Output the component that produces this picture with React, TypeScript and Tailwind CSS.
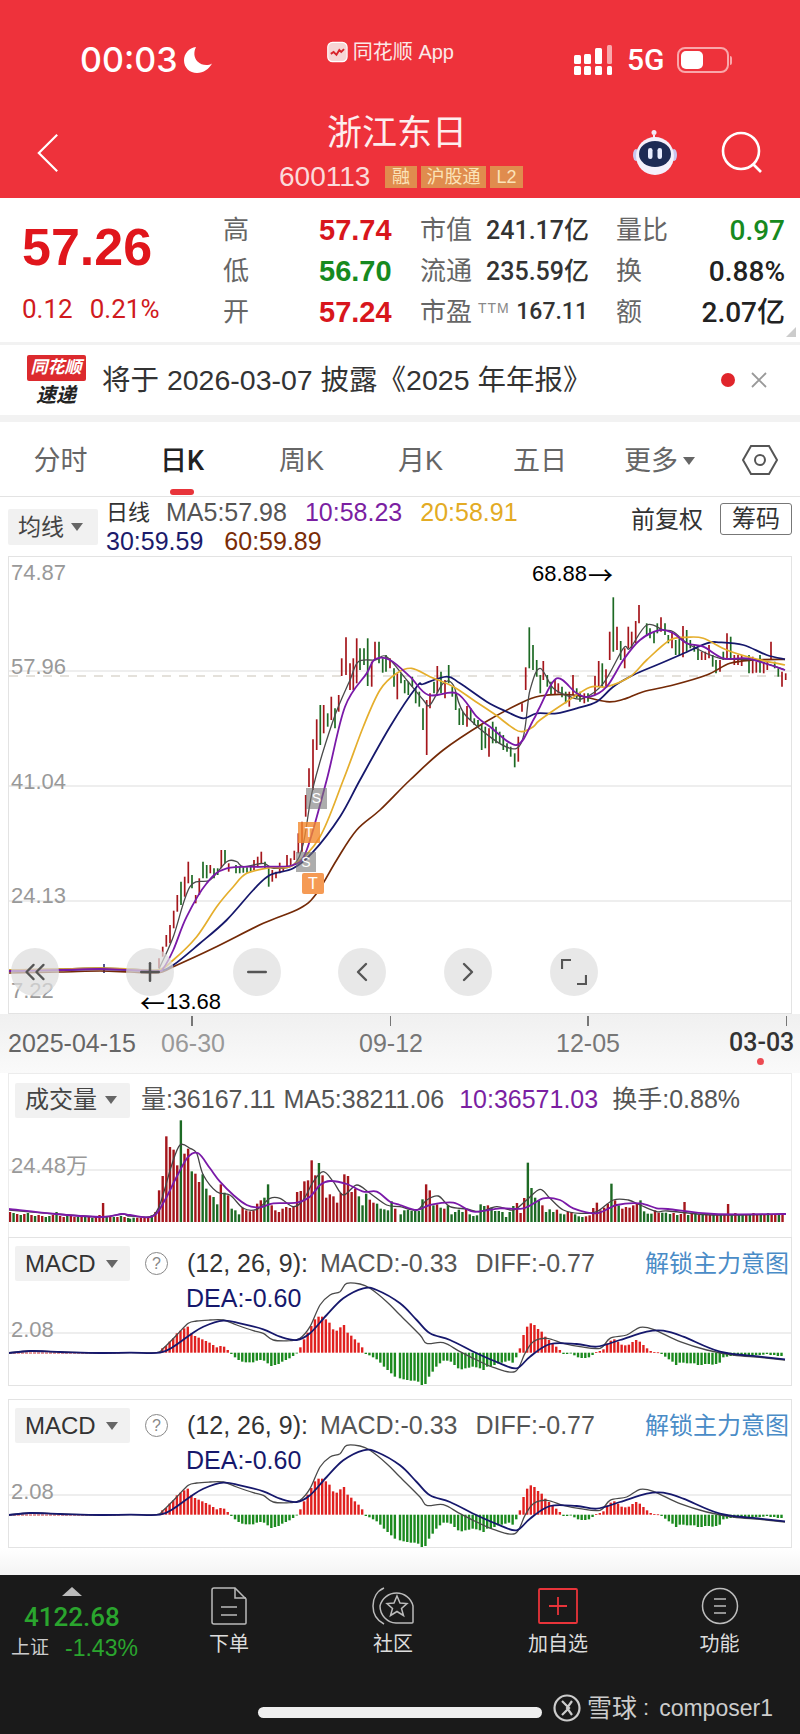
import { ChevronLeft, ChevronRight, ChevronsLeft, Minus, Plus } from 'lucide-react'

type Pt = [number, number]
type Bar = [number, number, number]

// map points read off a 3x crop back to page coordinates
const crop = (ox: number, oy: number, pts: number[][]): Pt[] => pts.map(([x, y]) => [ox + x / 3, oy + y / 3])

function smooth(pts: Pt[]) {
  let d = `M${pts[0][0]} ${pts[0][1]}`
  for (let i = 0; i < pts.length - 1; i++) {
    const p0 = pts[Math.max(i - 1, 0)]
    const p1 = pts[i]
    const p2 = pts[i + 1]
    const p3 = pts[Math.min(i + 2, pts.length - 1)]
    const c1x = p1[0] + (p2[0] - p0[0]) / 6
    const c1y = p1[1] + (p2[1] - p0[1]) / 6
    const c2x = p2[0] - (p3[0] - p1[0]) / 6
    const c2y = p2[1] - (p3[1] - p1[1]) / 6
    d += `C${c1x.toFixed(1)} ${c1y.toFixed(1)} ${c2x.toFixed(1)} ${c2y.toFixed(1)} ${p2[0].toFixed(1)} ${p2[1].toFixed(1)}`
  }
  return d
}

const RED = '#a5161c'
const GREEN = '#1d6a24'

const candleRed: Bar[] = [
  ...([[87,535,565],[98,500,530],[109,465,500],[120,435,490],[131,392,445],[142,345,395],[164,290,350],[175,245,310],[197,345,370],[208,295,345],[241,255,280],[274,210,265],[296,250,275],[372,240,270],[383,230,262],[394,215,250],[427,270,305],[438,275,295],[449,248,280],[460,262,275],[471,225,258],[482,235,255],[493,212,240],[505,160,220],[516,125,215],[527,45,110]] as Bar[]).map(([x, t, b]): Bar => [130 + x / 3, 780 + t / 3, 780 + b / 3]),
  ...([[27,565,621],[39,478,630],[50,418,510],[71,375,460],[94,350,420],[116,345,395],[125,235,288],[138,172,285],[150,250,330],[160,235,330],[170,175,310],[215,245,320],[225,185,240],[270,235,265],[292,280,358],[380,360,525],[390,340,385],[412,258,340],[435,300,355],[501,378,440],[567,445,530],[655,470,545],[666,370,395],[677,262,330]] as Bar[]).map(([x, t, b]): Bar => [300 + x / 3, 580 + t / 3, 580 + b / 3]),
  ...([[10,243,300],[45,300,345],[55,310,340],[88,335,380],[99,285,345],[133,340,370],[165,288,345],[176,243,320],[198,268,320],[209,155,240],[231,140,210],[254,205,265],[265,140,205],[275,155,205],[287,123,190],[297,75,130],[363,112,155],[396,155,205],[429,138,232],[485,215,240],[496,215,240],[507,195,235],[540,240,275],[561,160,235],[583,225,255],[594,225,255],[605,225,258],[638,230,280],[649,245,278],[671,245,280],[682,245,270],[693,185,240],[726,275,320],[737,280,300]] as Bar[]).map(([x, t, b]): Bar => [540 + x / 3, 580 + t / 3, 580 + b / 3]),
]

const candleGreen: Bar[] = [
  ...([[153,305,375],[186,285,325],[219,245,295],[230,255,295],[252,265,295],[263,265,285],[285,210,250],[318,255,280],[329,260,280],[340,262,278],[351,262,278],[362,255,275],[405,245,265],[416,265,320]] as Bar[]).map(([x, t, b]): Bar => [130 + x / 3, 780 + t / 3, 780 + b / 3]),
  ...([[61,375,495],[83,400,440],[105,385,445],[180,205,270],[192,205,255],[203,175,318],[237,185,250],[248,235,278],[258,225,275],[282,265,320],[303,280,310],[314,300,340],[325,305,345],[337,290,320],[347,325,370],[358,335,380],[369,385,450],[402,305,340],[423,275,340],[446,255,310],[457,320,350],[467,340,390],[478,385,435],[489,395,435],[512,385,420],[523,415,435],[534,420,440],[545,435,510],[556,440,505],[578,425,490],[588,440,490],[599,455,490],[610,465,510],[621,490,515],[632,500,530],[644,520,562],[688,142,265],[699,195,270],[710,240,290],[721,285,340]] as Bar[]).map(([x, t, b]): Bar => [300 + x / 3, 580 + t / 3, 580 + b / 3]),
  ...([[22,285,320],[33,305,345],[66,320,352],[77,335,370],[110,325,355],[120,335,365],[144,340,365],[187,250,320],[220,52,215],[242,183,240],[320,130,165],[330,145,175],[342,155,190],[352,130,160],[375,130,165],[385,165,190],[407,180,225],[418,175,225],[440,150,215],[451,180,205],[463,195,215],[474,205,240],[518,225,260],[528,240,280],[550,215,240],[572,170,235],[627,225,280],[660,225,278],[704,245,265],[715,265,290]] as Bar[]).map(([x, t, b]): Bar => [540 + x / 3, 580 + t / 3, 580 + b / 3]),
]

const flatL = (y: number): Pt[] => [[9, y], [60, y - 1], [100, y - 2], [130, y - 1], [158, y]]

const ma5: Pt[] = [
  ...flatL(970),
  ...crop(130, 780, [[90,560],[130,470],[180,320],[240,300],[290,245],[320,245],[340,260],[400,250],[430,265],[490,255],[520,190],[550,20]]),
  ...crop(300, 580, [[100,420],[150,300],[175,245],[225,240],[260,230],[320,300],[370,360],[390,375],[430,310],[460,315],[500,410],[650,505],[690,330],[720,265]]),
  ...crop(540, 580, [[40,325],[90,350],[130,355],[190,310],[250,205],[270,205],[320,135],[370,150],[400,155],[450,195],[540,235],[640,240],[735,270]]),
]
const ma10: Pt[] = [
  ...flatL(971),
  ...crop(130, 780, [[100,565],[130,510],[170,410],[230,310],[290,265],[410,260],[490,255],[530,210],[590,0]]),
  ...crop(300, 580, [[135,380],[200,280],[225,238],[270,240],[330,290],[385,345],[470,340],[530,410],[570,440],[650,495],[700,420]]),
  ...crop(540, 580, [[0,380],[50,295],[110,340],[150,350],[200,320],[250,240],[300,180],[360,150],[400,160],[440,190],[490,200],[550,235],[620,235],[690,255],[735,270]]),
]
const ma20: Pt[] = [
  ...flatL(970),
  ...crop(130, 780, [[130,540],[200,470],[260,380],[310,320],[350,280],[420,263],[490,255],[570,170],[640,0]]),
  ...crop(300, 580, [[190,440],[240,330],[290,280],[335,265],[390,290],[460,320],[520,360],[580,400],[640,445],[665,455],[700,440]]),
  ...crop(540, 580, [[0,420],[80,365],[150,322],[200,320],[270,290],[320,240],[390,180],[440,172],[490,175],[560,210],[640,235],[735,255]]),
]
const ma30: Pt[] = [
  ...flatL(971),
  ...crop(130, 780, [[130,555],[210,490],[290,420],[370,330],[420,285],[490,265],[550,215],[630,110],[690,0]]),
  ...crop(300, 580, [[270,440],[350,320],[370,312],[440,290],[480,310],[560,365],[620,395],[670,415],[710,400]]),
  ...crop(540, 580, [[50,400],[110,385],[170,365],[220,320],[280,285],[350,255],[420,225],[500,190],[540,187],[610,195],[680,225],[735,238]]),
]
const ma60: Pt[] = [
  ...flatL(973),
  ...crop(130, 780, [[130,560],[250,505],[400,430],[510,385],[560,340],[620,240],[680,150],[750,90]]),
  ...crop(300, 580, [[330,600],[430,510],[550,430],[650,375]]),
  ...crop(540, 580, [[0,348],[100,345],[200,365],[250,358],[310,335],[400,315],[500,285],[570,250],[640,240],[735,238]]),
]

// volume bars: positive red, negative green, values are tops in the 3x crop (base 335)
const volLeft = [10,-9,8,-7,8,-9,7,-6,7,6,-5,-6,7,-10,6,5,-6,6,5,-5,5,-5,5,-4,5,7,19,-6,5,-5,5,-6,5,-4]
const volA = [-325,-322,322,322,322,322,-315,305,240,197,78,110,118,165,-30,130,115,-183,190,215,-192,-235,255,-260,-282,222,-247,255,-295,-300,-312,292,300,303,300,280,270,-262,-222,285,300,305,295,290,293,290,245,242,213,210,150,195,-158,195,262,252,258,277,248,192,197,245,235,-258,-285,-250,268,277,-280,-295,-297,-300,-273,295]
const volB = [-312,-300,-298,-302,-302,-302,-267,222,240,-285,282,-292,295,-285,-312,-305,-298,-305,295,-312,-317,-315,-282,-287,285,-292,-302,-302,-305,-320,-305,-287,278,308,263,-157,-233,-262,-272,285,-305,-297,-305,298,-310,-312,305,305,-312,-318,-320,318,315,293,277,300,292,280,-220,270,-285,295,290,292,285,280,-270,-303,-310,-310,300,307,-307,-307]
const volRight = [-8,9,-7,8,20,-7,8,-9,7,-8,8,7,-9,8,-7,8,18,-8,9,-7,-8,8,-7,9,8,-7,8,-9,7,8,-7,9]

const vol5: Pt[] = [
  [9, 1210], [56, 1214], [102, 1217], [122, 1214], [128, 1216],
  ...crop(130, 1110, [[0,318],[60,320],[85,295],[105,235],[125,165],[150,105],[180,115],[200,130],[220,195],[260,245],[300,255],[340,295],[380,298],[420,265],[450,265],[490,290],[520,270],[550,215],[580,185],[610,215],[640,255],[680,225],[720,250],[770,285]]),
  ...crop(400, 1110, [[0,290],[50,300],[80,270],[115,258],[150,290],[200,297],[240,305],[290,290],[340,300],[380,270],[420,238],[450,265],[490,300],[540,310],[590,305],[640,270],[685,270],[720,285],[770,305]]),
  [668, 1211], [714, 1215], [786, 1214],
]
const vol10: Pt[] = [
  [9, 1209], [56, 1214], [102, 1217], [122, 1214], [128, 1215],
  ...crop(130, 1110, [[0,315],[50,322],[80,310],[110,260],[140,200],[175,140],[205,130],[240,175],[270,215],[310,255],[350,285],[390,292],[430,280],[500,278],[540,260],[570,225],[600,213],[650,222],[700,245],[740,245],[780,275]]),
  ...crop(400, 1110, [[0,285],[50,300],[90,285],[160,278],[220,305],[300,295],[370,295],[430,265],[480,270],[520,295],[590,310],[650,285],[720,280],[770,295]]),
  [668, 1209], [714, 1214], [786, 1214],
]

const macdA = [235,228,215,205,190,182,175,170,190,198,203,208,213,218,225,232,228,230,240,252,262,270,275,277,277,277,272,270,272,280,288,285,282,275,270,265,258,250,232,208,188,168,148,140,140,148,158,178,182,172,165,188,197,208,218,232,252,256,262,268,278,290,300,310,320]
const macdB = [325,328,330,332,332,335,345,342,320,305,290,280,272,272,275,285,295,298,295,293,290,292,295,300,290,290,285,280,278,275,272,278,262,235,195,170,160,165,177,185,200,210,222,230,240,252,252,250,256,262,264,264,262,255,246,243,238,220,212,208,215,224,226,224,216,210,215,225,235,243,246,247,252,260,268,275,285,278,278,280,280,280,285,285,282,282,284,282,278,262,260,258,258,254,254,256,258,256,255,255,254,252,255,255,258,258]

const diff: Pt[] = [
  [9, 1353], [30, 1351], [60, 1352], [100, 1353],
  ...crop(130, 1270, [[0,248],[80,248],[100,235],[140,195],[175,160],[200,153],[240,150],[280,150],[320,165],[370,182],[400,190],[430,210],[480,212],[510,205],[540,170],[570,105],[600,75],[630,65],[650,40],[690,42],[720,55],[770,95]]),
  ...crop(400, 1270, [[0,135],[60,195],[80,220],[130,218],[180,245],[230,270],[280,292],[345,305],[375,250],[400,215],[440,205],[490,220],[540,230],[600,235],[630,205],[680,195],[720,172],[760,178],[840,215],[920,240],[1000,255],[1080,262],[1155,270]]),
]
const dea: Pt[] = [
  [9, 1353], [30, 1351], [60, 1352], [100, 1353],
  ...crop(130, 1270, [[0,248],[90,248],[130,230],[180,195],[220,170],[280,152],[330,160],[400,178],[450,200],[500,210],[540,190],[590,135],[640,85],[700,55],[740,60]]),
  ...crop(400, 1270, [[0,100],[50,150],[90,190],[150,210],[230,250],[300,280],[350,295],[390,260],[450,222],[530,222],[590,230],[660,210],[740,185],[790,182],[850,200],[960,245],[1080,260],[1155,268]]),
]

const quoteRows = [
  { a: '高', av: '57.74', ac: 'text-[#d8161c]', b: '市值', bv: '241.17亿', c: '量比', cv: '0.97', cc: 'text-[#178a1f]' },
  { a: '低', av: '56.70', ac: 'text-[#178a1f]', b: '流通', bv: '235.59亿', c: '换', cv: '0.88%', cc: 'text-[#222]' },
  { a: '开', av: '57.24', ac: 'text-[#d8161c]', b: '市盈', bv: '167.11', c: '额', cv: '2.07亿', cc: 'text-[#222]' },
]

function Arrow({ className = 'border-t-[#666]' }: { className?: string }) {
  return <span className={`inline-block h-0 w-0 border-x-[6px] border-t-[8px] border-x-transparent ${className}`} />
}

function StatusBar() {
  return (
    <div className="flex h-[112px] items-center pt-[8px] pl-[80px] text-white">
      <span className="w-[96px] font-['Inter',sans-serif] text-[34px] font-medium leading-none">00:03</span>
      <svg viewBox="0 0 28 26" className="ml-[8px] h-[26px] w-[28px]" fill="#fff">
        <path d="M12 0C5 1 0 6.500 0 13.500 0 20.500 5.700 26 13 26c6.500 0 12-4 15-9.500C24 19 17.500 18.500 13.500 14.500 9.800 10.500 9.500 5 12 0Z" />
      </svg>
      <div className="mb-[16px] ml-[115px] flex w-[127px] items-center gap-[5px] whitespace-nowrap">
        <svg viewBox="0 0 22 22" className="h-[22px] w-[22px]">
          <rect x="0.800" y="0.800" width="20.400" height="20.400" rx="5" fill="#f6d5d5" stroke="#fff" strokeWidth="1.200" />
          <path d="M4 13l3-2 3 3 3-5 2 2 3-3" stroke="#d8242c" strokeWidth="2" fill="none" />
        </svg>
        <span className="text-[20px] leading-none text-[#fbe9e9]">同花顺 App</span>
      </div>
      <svg viewBox="0 0 38 30" className="ml-[120px] h-[30px] w-[38px]" fill="#fff">
        <rect x="0" y="10" width="7" height="9" rx="1.500" />
        <rect x="0" y="21" width="7" height="9" rx="1.500" />
        <rect x="10" y="9" width="7" height="10" rx="1.500" />
        <rect x="10" y="21" width="7" height="9" rx="1.500" />
        <rect x="21" y="3" width="7" height="16" rx="1.500" />
        <rect x="21" y="21" width="7" height="9" rx="1.500" />
        <rect x="33" y="0" width="5" height="19" rx="1.500" fill="#f8a9ac" />
        <rect x="33" y="21" width="5" height="9" rx="1.500" />
      </svg>
      <span className="ml-[15px] font-['Roboto',sans-serif] text-[30px] font-medium leading-none">5G</span>
      <div className="ml-[12px] flex items-center">
        <div className="flex h-[26px] w-[52px] items-center rounded-[8px] border-2 border-[#f9a7aa] px-[2px]">
          <div className="h-[18px] w-[22px] rounded-[5px] bg-white" />
        </div>
        <div className="ml-px h-[9px] w-[2px] rounded-r bg-[#f9a7aa]" />
      </div>
    </div>
  )
}

function RobotIcon() {
  return (
    <svg viewBox="0 0 50 46" className="h-[46px] w-[50px]">
      <circle cx="24" cy="3.500" r="2.500" fill="#f3e9f7" />
      <path d="M24 6v6" stroke="#f3e9f7" strokeWidth="2" />
      <ellipse cx="6" cy="26" rx="3" ry="6" fill="#c9c6ef" />
      <ellipse cx="44" cy="26" rx="3" ry="6" fill="#c9c6ef" />
      <circle cx="25" cy="27" r="19" fill="#f4f0fb" />
      <ellipse cx="25" cy="25" rx="16" ry="13" fill="#1d2a55" />
      <rect x="18" y="19" width="4.500" height="11" rx="2.200" fill="#e8ecff" />
      <rect x="27.500" y="19" width="4.500" height="11" rx="2.200" fill="#e8ecff" />
    </svg>
  )
}

function Header() {
  return (
    <header className="h-[198px] bg-[#ee323b]">
      <StatusBar />
      <div className="grid h-[86px] grid-cols-[279px_244px_1fr] text-white">
        <div className="flex items-center pb-[4px] pl-[37px]">
          <svg viewBox="0 0 24 42" className="h-[40px] w-[22px]" fill="none" stroke="#fff" strokeWidth="2.400">
            <path d="M22 1 2 21l20 20" />
          </svg>
        </div>
        <div className="flex flex-col">
          <div className="ml-[48px] w-[140px] text-center text-[35px] leading-[42px] text-[#fdeeee]">浙江东日</div>
          <div className="mt-[10px] flex items-center">
            <span className="w-[106px] text-[28px] leading-[26px] text-[#fbdada]">600113</span>
            <span className="flex h-[22px] w-[32px] items-center justify-center bg-[#e08c4e] text-[18px] leading-none text-[#fbe3b8]">融</span>
            <span className="ml-[4px] flex h-[22px] w-[65px] items-center justify-center bg-[#e08c4e] text-[18px] leading-none text-[#fbe3b8]">沪股通</span>
            <span className="ml-[4px] flex h-[22px] w-[33px] items-center justify-center bg-[#e08c4e] text-[18px] leading-none text-[#fbe3b8]">L2</span>
          </div>
        </div>
        <div className="flex items-center pb-[6px]">
          <div className="ml-[107px]">
            <RobotIcon />
          </div>
          <svg viewBox="0 0 42 42" className="ml-[41px] h-[42px] w-[42px]" fill="none" stroke="#fff" strokeWidth="2.600">
            <circle cx="20" cy="20" r="18" />
            <path d="M32 33l8 8" />
          </svg>
        </div>
      </div>
    </header>
  )
}

function Quote() {
  return (
    <section className="relative flex h-[144px] bg-white">
      <div className="w-[223px] pl-[22px] pt-[24px]">
        <div className="text-[52px] font-bold leading-[50px] text-[#e0161c]">57.26</div>
        <div className="mt-[21px] flex font-['Roboto',sans-serif] text-[26px] leading-[32px] text-[#d01a20]">
          <span>0.12</span>
          <span className="ml-[17px]">0.21%</span>
        </div>
      </div>
      <div className="grid auto-rows-[41px] grid-cols-[96px_73px_28px_66px_102px_28px_52px_117px] items-center whitespace-nowrap pt-[12px]">
        {quoteRows.map((r) => (
          <div key={r.a} className="contents">
            <span className="text-[26px] text-[#666]">{r.a}</span>
            <span className={`text-[29px] font-bold ${r.ac}`}>{r.av}</span>
            <span />
            {r.b === '市盈' ? (
              <div className="col-span-2 flex items-center">
                <span className="text-[26px] text-[#666]">市盈</span>
                <span className="mb-[8px] ml-[6px] text-[14px] tracking-[1px] text-[#888]">TTM</span>
                <span className="ml-auto font-['Roboto',sans-serif] text-[23px] font-medium text-[#333]">{r.bv}</span>
              </div>
            ) : (
              <>
                <span className="text-[26px] text-[#666]">{r.b}</span>
                <span className="text-right font-['Roboto','Noto_Sans_CJK_SC',sans-serif] text-[25px] font-medium text-[#333]">{r.bv}</span>
              </>
            )}
            <span />
            <span className="text-[26px] text-[#666]">{r.c}</span>
            <span className={`text-right font-['Roboto','Noto_Sans_CJK_SC',sans-serif] text-[28px] font-medium ${r.cc}`}>{r.cv}</span>
          </div>
        ))}
      </div>
      <div className="absolute bottom-[5px] right-[4px] h-0 w-0 border-b-[10px] border-l-[10px] border-b-[#ccc] border-l-transparent" />
    </section>
  )
}

function Notice() {
  return (
    <section className="border-t-[3px] border-[#f2f2f2] bg-white">
      <div className="flex h-[70px] items-center pl-[26px] pr-[33px]">
        <div className="flex w-[60px] flex-col items-center">
          <div className="flex h-[26px] w-[59px] items-center justify-center rounded-[2px] bg-[#dc2a2e] text-[17px] font-bold italic leading-none text-white">同花顺</div>
          <div className="mt-[3px] text-[20px] font-bold italic leading-[22px] text-[#222]">速递</div>
        </div>
        <span className="ml-[16px] text-[28.500px] leading-none text-[#333]">将于 2026-03-07 披露《2025 年年报》</span>
        <span className="ml-auto h-[14px] w-[14px] rounded-full bg-[#e0252b]" />
        <svg viewBox="0 0 16 16" className="ml-[16px] h-[16px] w-[16px]" stroke="#999" strokeWidth="1.800">
          <path d="M1 1l14 14M15 1 1 15" />
        </svg>
      </div>
      <div className="h-[7px] bg-[#f2f2f2]" />
    </section>
  )
}

function Tabs() {
  const tabs = ['分时', '日K', '周K', '月K', '五日']
  return (
    <nav className="grid h-[75px] grid-cols-[121px_122px_117px_121px_118px_121px_1fr] items-center border-b border-[#e3e3e3] bg-white pb-[1px]">
      {tabs.map((t) => (
        <div key={t} className={`relative flex h-full items-center justify-center pt-[5px] text-[27px] ${t === '日K' ? "font-['Roboto','Noto_Sans_CJK_SC',sans-serif] font-medium text-[#222]" : 'text-[#666]'}`}>
          {t}
          {t === '日K' && <span className="absolute bottom-0 h-[6px] w-[24px] rounded-full bg-[#e8343a]" />}
        </div>
      ))}
      <div className="flex items-center justify-center gap-[5px] pt-[5px] text-[27px] text-[#666]">
        更多
        <Arrow />
      </div>
      <div className="flex items-center justify-center pt-[2px]">
        <svg viewBox="0 0 36 30" className="h-[30px] w-[36px]" fill="none" stroke="#555" strokeWidth="2">
          <path d="M9 1h18l8 14-8 14H9L1 15Z" />
          <circle cx="18" cy="15" r="5" />
        </svg>
      </div>
    </nav>
  )
}

function MaLegend() {
  return (
    <div className="flex h-[59px] bg-white pt-[1px] pr-[8px]">
      <div className="ml-[8px] mt-[11px] flex h-[36px] w-[90px] items-center gap-[7px] rounded-[2px] bg-[#f1f1f1] pl-[10px] text-[23px] text-[#444]">
        均线
        <Arrow />
      </div>
      <div className="ml-[8px] text-[25px] leading-[29px]">
        <div className="flex">
          <span className="w-[45px] text-[22px] text-[#333]">日线</span>
          <span className="ml-[15px] text-[#555]">MA5:57.98</span>
          <span className="ml-[18px] text-[#7b1fa2]">10:58.23</span>
          <span className="ml-[18px] text-[#e3ab24]">20:58.91</span>
        </div>
        <div className="flex">
          <span className="text-[#1b1b6b]">30:59.59</span>
          <span className="ml-[21px] text-[#7a2c06]">60:59.89</span>
        </div>
      </div>
      <span className="ml-auto mt-[8px] text-[24px] leading-[28px] text-[#333]">前复权</span>
      <span className="ml-[17px] mt-[5px] flex h-[32px] w-[72px] items-center justify-center rounded-[3px] border border-[#777] text-[24px] leading-none text-[#333]">筹码</span>
    </div>
  )
}

function MainChart() {
  const gridY = [671, 786, 901]
  return (
    <section className="relative mx-2 h-[458px] border border-[#e3e3e3] bg-white">
      <svg viewBox="9 557 782 456" className="block h-[456px] w-[782px]" fill="none">
        {gridY.map((y) => (
          <path key={y} d={`M9 ${y}H791`} stroke="#e8e8e8" strokeWidth="1.300" />
        ))}
        <path d="M9 676H791" stroke="#c9c4b8" strokeWidth="1.200" strokeDasharray="9 8" />
        {candleRed.map(([x, t, b], i) => (
          <path key={i} d={`M${x.toFixed(1)} ${t.toFixed(1)}V${b.toFixed(1)}`} stroke={RED} strokeWidth="1.700" />
        ))}
        {candleGreen.map(([x, t, b], i) => (
          <path key={i} d={`M${x.toFixed(1)} ${t.toFixed(1)}V${b.toFixed(1)}`} stroke={GREEN} strokeWidth="1.700" />
        ))}
        <path d="M104 964V973" stroke="#1b1b6b" strokeWidth="1.500" />
        <path d={smooth(ma60)} stroke="#742a07" strokeWidth="1.700" />
        <path d={smooth(ma5)} stroke="#4a4a4a" strokeWidth="1.300" />
        <path d={smooth(ma30)} stroke="#16186c" strokeWidth="1.800" />
        <path d={smooth(ma20)} stroke="#e5ae2c" strokeWidth="1.700" />
        <path d={smooth(ma10)} stroke="#7a19a8" strokeWidth="1.800" />
      </svg>

      <span className="absolute left-[2px] top-[3px] text-[22px] leading-[26px] text-[#999]">74.87</span>
      <span className="absolute left-[2px] top-[97px] text-[22px] leading-[26px] text-[#999]">57.96</span>
      <span className="absolute left-[2px] top-[212px] text-[22px] leading-[26px] text-[#999]">41.04</span>
      <span className="absolute left-[2px] top-[326px] text-[22px] leading-[26px] text-[#999]">24.13</span>
      <span className="absolute left-[2px] top-[421px] text-[22px] leading-[26px] text-[#999]">7.22</span>
      <span className="absolute left-[523px] top-[4px] flex items-center text-[22px] leading-[26px] text-black">
        68.88<span className="ml-px font-['Noto_Sans_CJK_SC',sans-serif] text-[25px] leading-[26px]">→</span>
      </span>
      <span className="absolute left-[131px] top-[432px] flex items-center text-[22px] leading-[26px] text-black">
        <span className="mr-px font-['Noto_Sans_CJK_SC',sans-serif] text-[25px] leading-[26px]">←</span>13.68
      </span>

      <span className="absolute left-[297px] top-[231px] flex h-[21px] w-[21px] items-center justify-center bg-[#77777799] text-[14px] text-white">S</span>
      <span className="absolute left-[289px] top-[265px] flex h-[21px] w-[22px] items-center justify-center bg-[#f28a2ecc] text-[14px] text-white">T</span>
      <span className="absolute left-[287px] top-[295px] flex h-[20px] w-[20px] items-center justify-center bg-[#77777799] text-[14px] text-white">S</span>
      <span className="absolute left-[293px] top-[316px] flex h-[21px] w-[22px] items-center justify-center rounded-[2px] bg-[#f59a54] text-[16px] text-white">T</span>

      {/* zoom and pan buttons float over the chart */}
      <div className="absolute left-[2px] top-[391px] flex text-[#555]">
        <span className="flex h-[48px] w-[48px] items-center justify-center rounded-full bg-[#dcdcdcb8]">
          <ChevronsLeft size={34} strokeWidth={1.600} />
        </span>
        <span className="ml-[67px] flex h-[48px] w-[48px] items-center justify-center rounded-full bg-[#dcdcdcb8]">
          <Plus size={30} strokeWidth={2} />
        </span>
        <span className="ml-[59px] flex h-[48px] w-[48px] items-center justify-center rounded-full bg-[#e3e3e3d0]">
          <Minus size={30} strokeWidth={2} />
        </span>
        <span className="ml-[57px] flex h-[48px] w-[48px] items-center justify-center rounded-full bg-[#e3e3e3d0]">
          <ChevronLeft size={32} strokeWidth={1.800} />
        </span>
        <span className="ml-[58px] flex h-[48px] w-[48px] items-center justify-center rounded-full bg-[#e3e3e3d0]">
          <ChevronRight size={32} strokeWidth={1.800} />
        </span>
        <span className="ml-[58px] flex h-[48px] w-[48px] items-center justify-center rounded-full bg-[#e3e3e3d0]">
          <svg viewBox="0 0 26 26" className="h-[26px] w-[26px]" fill="none" stroke="#555" strokeWidth="2.200">
            <path d="M1 10V1h9M25 16v9h-9" />
          </svg>
        </span>
      </div>
    </section>
  )
}

function TimeAxis() {
  return (
    <div className="h-[59px] bg-linear-to-b from-[#f0f0f0] to-[#fafafa]">
      <div className="flex h-[12px] items-end">
        <span className="ml-[191px] h-[10px] w-[1.500px] bg-[#777]" />
        <span className="ml-[197px] h-[10px] w-[1.500px] bg-[#777]" />
        <span className="ml-[196px] h-[10px] w-[1.500px] bg-[#777]" />
        <span className="ml-[197px] h-[10px] w-[1.500px] bg-[#777]" />
      </div>
      <div className="mt-[2px] flex pl-[8px] text-[25px] leading-[30px]">
        <span className="w-[130px] text-[#666]">2025-04-15</span>
        <span className="ml-[23px] w-[64px] text-[#999]">06-30</span>
        <span className="ml-[134px] w-[64px] text-[#777]">09-12</span>
        <span className="ml-[133px] w-[64px] text-[#777]">12-05</span>
        <span className="ml-[109px] font-['Roboto',sans-serif] font-medium text-[#333]">03-03</span>
      </div>
      <div className="ml-[757px] h-[7px] w-[7px] rounded-full bg-[#ec4a52]" />
    </div>
  )
}

function Volume() {
  const bars: { x: number; v: number }[] = []
  volLeft.forEach((h, i) => bars.push({ x: 10 + i * 3.58, v: h }))
  volA.forEach((z, i) => bars.push({ x: 130 + (i * 10.9) / 3, v: Math.sign(z) * ((335 - Math.abs(z)) / 3) }))
  volB.forEach((z, i) => bars.push({ x: 400.700 + (i * 10.9) / 3, v: Math.sign(z) * ((335 - Math.abs(z)) / 3) }))
  volRight.forEach((h, i) => bars.push({ x: 670 + i * 3.63, v: h }))
  return (
    <section className="mx-2 h-[164px] border-x border-t border-[#ececec] bg-white">
      <div className="flex h-[44px] items-center pt-[8px] pl-[6px] text-[25px] text-[#555]">
        <div className="flex h-[35px] w-[115px] items-center gap-[8px] rounded-[2px] bg-[#f1f1f1] pl-[10px] text-[#444]">
          <span className="text-[24px]">成交量</span>
          <Arrow />
        </div>
        <span className="ml-[11px]">量:36167.11</span>
        <span className="ml-[8px]">MA5:38211.06</span>
        <span className="ml-[15px] text-[#7b1fa2]">10:36571.03</span>
        <span className="ml-[14px]">换手:0.88%</span>
      </div>
      <div className="relative h-[119px]">
        <svg viewBox="9 1118 782 119" className="block h-[119px] w-[782px]" fill="none">
          <path d="M9 1170H791" stroke="#e8e8e8" strokeWidth="1.300" />
          {bars.map((b, i) => (
            <rect key={i} x={b.x - 1.200} y={1222 - Math.abs(b.v)} width="2.400" height={Math.abs(b.v)} fill={b.v > 0 ? RED : GREEN} />
          ))}
          <path d={smooth(vol5)} stroke="#444" strokeWidth="1.300" />
          <path d={smooth(vol10)} stroke="#7a19a8" strokeWidth="1.800" />
        </svg>
        <span className="absolute left-[2px] top-[35px] text-[22px] leading-[26px] text-[#999]">24.48万</span>
      </div>
    </section>
  )
}

function Macd() {
  const bars: { x: number; z: number }[] = []
  macdA.forEach((z, i) => bars.push({ x: 130 + (97 + i * 10.9) / 3, z }))
  macdB.forEach((z, i) => bars.push({ x: 400 + (i * 10.9) / 3, z }))
  const zero = 1352.7
  return (
    <section className="relative mx-2 h-[149px] border border-[#e3e3e3] bg-white">
      <svg viewBox="9 1238 782 147" className="block h-[147px] w-[782px]" fill="none">
        <path d="M9 1333H791" stroke="#e8e8e8" strokeWidth="1.300" />
        <path d="M9 1353H120" stroke="#c33" strokeWidth="1" strokeDasharray="3 1" />
        {bars.map((b, i) => {
          const y = 1270 + b.z / 3
          const isRed = b.z < 248
          return (
            <rect
              key={i}
              x={b.x - 1.200}
              y={isRed ? y : zero}
              width="2.400"
              height={Math.max(Math.abs(y - zero), 0.800)}
              fill={isRed ? '#e0201f' : '#1b8a1e'}
            />
          )
        })}
        <path d={smooth(diff)} stroke="#4a4a4a" strokeWidth="1.300" />
        <path d={smooth(dea)} stroke="#16186c" strokeWidth="1.800" />
      </svg>
      <div className="absolute inset-x-0 top-[8px] flex h-[35px] items-center pl-[6px] text-[25px] text-[#555]">
        <div className="flex h-[35px] w-[115px] items-center gap-[10px] rounded-[2px] bg-[#f1f1f1] pl-[10px] text-[#333]">
          <span className="text-[24px]">MACD</span>
          <Arrow />
        </div>
        <span className="ml-[15px] flex h-[23px] w-[23px] items-center justify-center rounded-full border border-[#888] text-[16px] leading-none text-[#888]">?</span>
        <span className="ml-[19px] text-[#333]">(12, 26, 9):</span>
        <span className="ml-[12px]">MACD:-0.33</span>
        <span className="ml-[18px]">DIFF:-0.77</span>
        <span className="ml-auto mr-[2px] text-[24px] text-[#4a8cc7]">解锁主力意图</span>
      </div>
      <span className="absolute left-[177px] top-[45px] text-[25px] leading-[30px] text-[#16186c]">DEA:-0.60</span>
      <span className="absolute left-[2px] top-[79px] text-[22px] leading-[26px] text-[#999]">2.08</span>
    </section>
  )
}

function FooterBar() {
  return (
    <footer className="relative h-[159px] bg-[#1a1a1a] text-[#ddd]">
      <div className="grid grid-cols-[149px_160px_168px_162px_1fr] pt-[12px]">
        <div className="flex flex-col pl-[11px]">
          <span className="ml-[51px] h-0 w-0 border-x-[10px] border-b-[9px] border-x-transparent border-b-[#bbb]" />
          <span className="ml-[13px] mt-[6px] font-['Roboto',sans-serif] text-[26px] font-medium leading-[30px] text-[#2aa52e]">4122.68</span>
          <div className="mt-[2px] flex items-center">
            <span className="text-[19px] leading-[28px] text-[#ccc]">上证</span>
            <span className="ml-[16px] text-[23px] leading-[28px] text-[#2aa52e]">-1.43%</span>
          </div>
        </div>
        <div className="flex flex-col items-center">
          <svg viewBox="0 0 36 38" className="h-[38px] w-[36px]" fill="none" stroke="#bbb" strokeWidth="1.500">
            <path d="M1 3q0-2 2-2h21l11 11v24q0 1-1 1H3q-2 0-2-2Z" />
            <path d="M24 1v10h11M10 20h16M10 28h16" />
          </svg>
          <span className="mt-[5px] text-[20px] leading-[28px]">下单</span>
        </div>
        <div className="flex flex-col items-center">
          <svg viewBox="0 0 42 38" className="h-[38px] w-[42px]" fill="none" stroke="#bbb" strokeWidth="1.500">
            <path d="M12 37C4 33 1 27 1 19 1 11 5 4 12 1" />
            <path d="M8 19a17 17 0 0 1 33 0v16q0 1-1 1H24A17 17 0 0 1 8 19Z" />
            <path d="m25 9 3 7 7 .5-5.500 5 2 7-6.500-4-6.500 4 2-7-5.500-5 7-.5Z" />
          </svg>
          <span className="mt-[5px] text-[20px] leading-[28px]">社区</span>
        </div>
        <div className="flex flex-col items-center">
          <svg viewBox="0 0 40 38" className="h-[38px] w-[40px]" fill="none" stroke="#e8343a" strokeWidth="1.800">
            <rect x="1" y="2" width="38" height="34" rx="1" />
            <path d="M20 10v18M11 19h18" />
          </svg>
          <span className="mt-[5px] text-[20px] leading-[28px]">加自选</span>
        </div>
        <div className="flex flex-col items-center">
          <svg viewBox="0 0 38 38" className="h-[38px] w-[38px]" fill="none" stroke="#bbb" strokeWidth="1.500">
            <circle cx="19" cy="19" r="17.500" />
            <path d="M13 12h12M13 19h12M13 26h12" />
          </svg>
          <span className="mt-[5px] text-[20px] leading-[28px]">功能</span>
        </div>
      </div>
      {/* home indicator and the site watermark lie over the bar */}
      <div className="absolute left-[258px] top-[132px] h-[11px] w-[284px] rounded-full bg-[#eee]" />
      <div className="absolute left-[553px] top-[118px] flex items-center text-[#ccc]">
        <svg viewBox="0 0 28 28" className="h-[28px] w-[28px]" fill="none" stroke="#ccc" strokeWidth="2.200">
          <circle cx="14" cy="14" r="12.500" />
          <path d="M9 7l7 7-7 7M19 7l-5 7 5 7" />
        </svg>
        <span className="ml-[6px] text-[25px] leading-[30px]">雪球</span>
        <span className="ml-[6px] text-[22px] leading-[30px]">:</span>
        <span className="ml-[10px] text-[23px] leading-[30px]">composer1</span>
      </div>
    </footer>
  )
}

export default function App() {
  return (
    <div className="mx-auto h-[1734px] w-[800px] overflow-hidden bg-white font-['Liberation_Sans','Noto_Sans_CJK_SC',sans-serif]">
      <Header />
      <Quote />
      <Notice />
      <Tabs />
      <MaLegend />
      <MainChart />
      <TimeAxis />
      <Volume />
      <Macd />
      <div className="h-[13px]" />
      <Macd />
      <div className="h-[27px] bg-linear-to-b from-white to-[#f4f4f4]" />
      <FooterBar />
    </div>
  )
}
